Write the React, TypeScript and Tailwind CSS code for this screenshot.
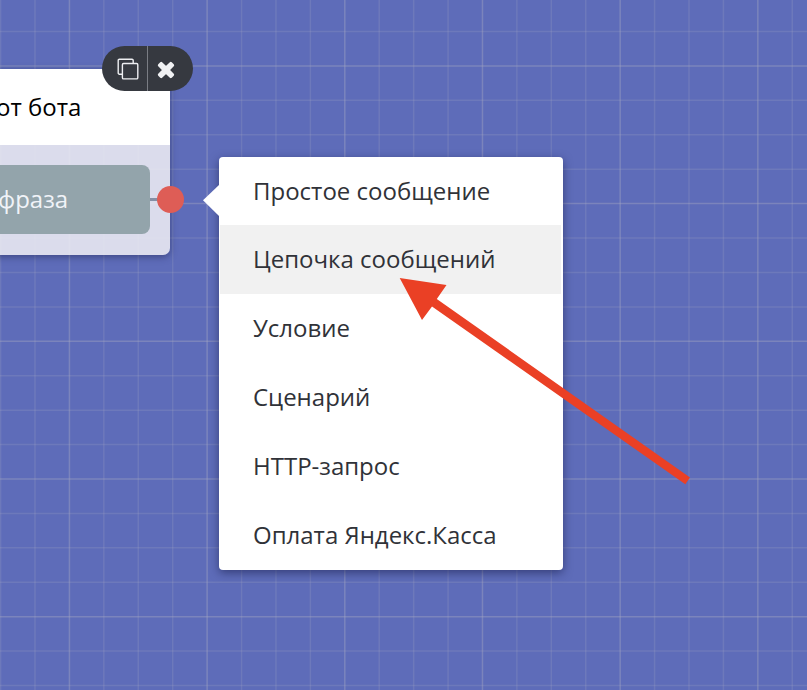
const pitch = 34.42;
const columns = Array.from({ length: 24 }, (_, i) => ({ at: 0.6 + i * pitch, major: i % 4 === 2 }));
const rows = Array.from({ length: 21 }, (_, i) => ({ at: -2.9 + i * pitch, major: i % 4 === 2 }));

const options = [
  'Простое сообщение',
  'Цепочка сообщений',
  'Условие',
  'Сценарий',
  'HTTP-запрос',
  'Оплата Яндекс.Касса',
];

function Grid() {
  return (
    <svg className="absolute inset-0" width="807" height="690" stroke="#a5a7c2" strokeWidth="1.5">
      {columns.map((l) => (
        <line key={l.at} x1={l.at} x2={l.at} y1="0" y2="690" strokeOpacity={l.major ? 0.42 : 0.22} />
      ))}
      {rows.map((l) => (
        <line key={l.at} x1="0" x2="807" y1={l.at} y2={l.at} strokeOpacity={l.major ? 0.42 : 0.22} />
      ))}
    </svg>
  );
}

function BotCard() {
  return (
    <section className="absolute top-[69px] left-[-180px] flex h-[185.5px] w-[350.4px] flex-col overflow-hidden rounded-[7px] shadow-[0_2px_7px_rgba(30,35,80,0.5)]">
      <header className="flex h-[76px] shrink-0 items-center justify-end bg-white pr-[89px] pb-[1px] text-[24px] whitespace-nowrap text-black">
        от бота
      </header>
      <div className="flex flex-1 items-start bg-[#e9e9f2]/90 pt-[20px] pl-[21px]">
        <div className="flex h-[69px] w-[308.6px] items-center justify-end rounded-[8px] bg-[#93a4ab] pr-[81.5px] pb-[1px] text-[24px] whitespace-nowrap text-[#f0f3f8]">
          фраза
        </div>
        <div className="mt-[33px] h-[3px] flex-1 bg-[#868fa5]" />
      </div>
    </section>
  );
}

function Toolbar() {
  return (
    <div className="absolute top-[46.3px] left-[101.5px] flex h-[44.7px] w-[91.5px] overflow-hidden rounded-full bg-[#363940]">
      <button className="flex w-[46px] items-center justify-center border-r border-[#7a7d84] pl-[7px]">
        <svg width="22" height="22" viewBox="0 0 22 22" fill="none" stroke="#eeeff2" strokeWidth="1.4">
          <rect x="5.4" y="5.5" width="15.4" height="15.4" rx="1.2" />
          <path d="M5.4 16.2H2.4A1.2 1.2 0 0 1 1.2 15V2.4A1.2 1.2 0 0 1 2.4 1.2H15a1.2 1.2 0 0 1 1.2 1.2v3.1" />
        </svg>
      </button>
      <button className="flex flex-1 items-center pt-[2px] pl-[8.5px]">
        <svg width="20" height="20" viewBox="0 0 20 20" fill="#f0f1f3" stroke="#f0f1f3" strokeWidth="2.7" strokeLinejoin="round">
          <path d="M5.2 3.2 10 7.8 14.8 3.2 16.8 5.2 12.2 10 16.8 14.8 14.8 16.8 10 12.2 5.2 16.8 3.2 14.8 7.8 10 3.2 5.2Z" />
        </svg>
      </button>
    </div>
  );
}

function OptionMenu() {
  return (
    <div className="absolute top-[156.6px] left-[218.5px] w-[344.3px] rounded-[4px] bg-white px-[1.5px] shadow-[0_3px_10px_rgba(20,25,70,0.55)]">
      <svg className="absolute top-[28px] left-[-15.5px]" width="16" height="31" viewBox="0 0 16 31">
        <path d="M16 0 0 15.2 16 31Z" fill="#fff" />
      </svg>
      <ul className="flex flex-col">
        {options.map((label, i) => (
          <li
            key={label}
            className={`flex h-[68.83px] items-center pb-[1px] pl-[33px] text-[24px] whitespace-nowrap text-[#303238] ${i === 1 ? 'bg-[#f1f1f1]' : ''}`}
          >
            {label}
          </li>
        ))}
      </ul>
    </div>
  );
}

export default function App() {
  return (
    <main className="relative h-[690px] w-[807px] overflow-hidden bg-[#5e6cb9] font-['Open_Sans','Noto_Sans',sans-serif]">
      <Grid />
      <BotCard />
      <Toolbar />
      <div className="absolute top-[185.6px] left-[156.6px] size-[27.5px] rounded-full bg-[#de5d56]" />
      <OptionMenu />
      <svg className="absolute inset-0" width="807" height="690" fill="#ea4025">
        <path d="M399.7 278 446.5 285 436.8 299 690 477.5 685.3 484.2 432 306.5 422 320Z" />
      </svg>
    </main>
  );
}
